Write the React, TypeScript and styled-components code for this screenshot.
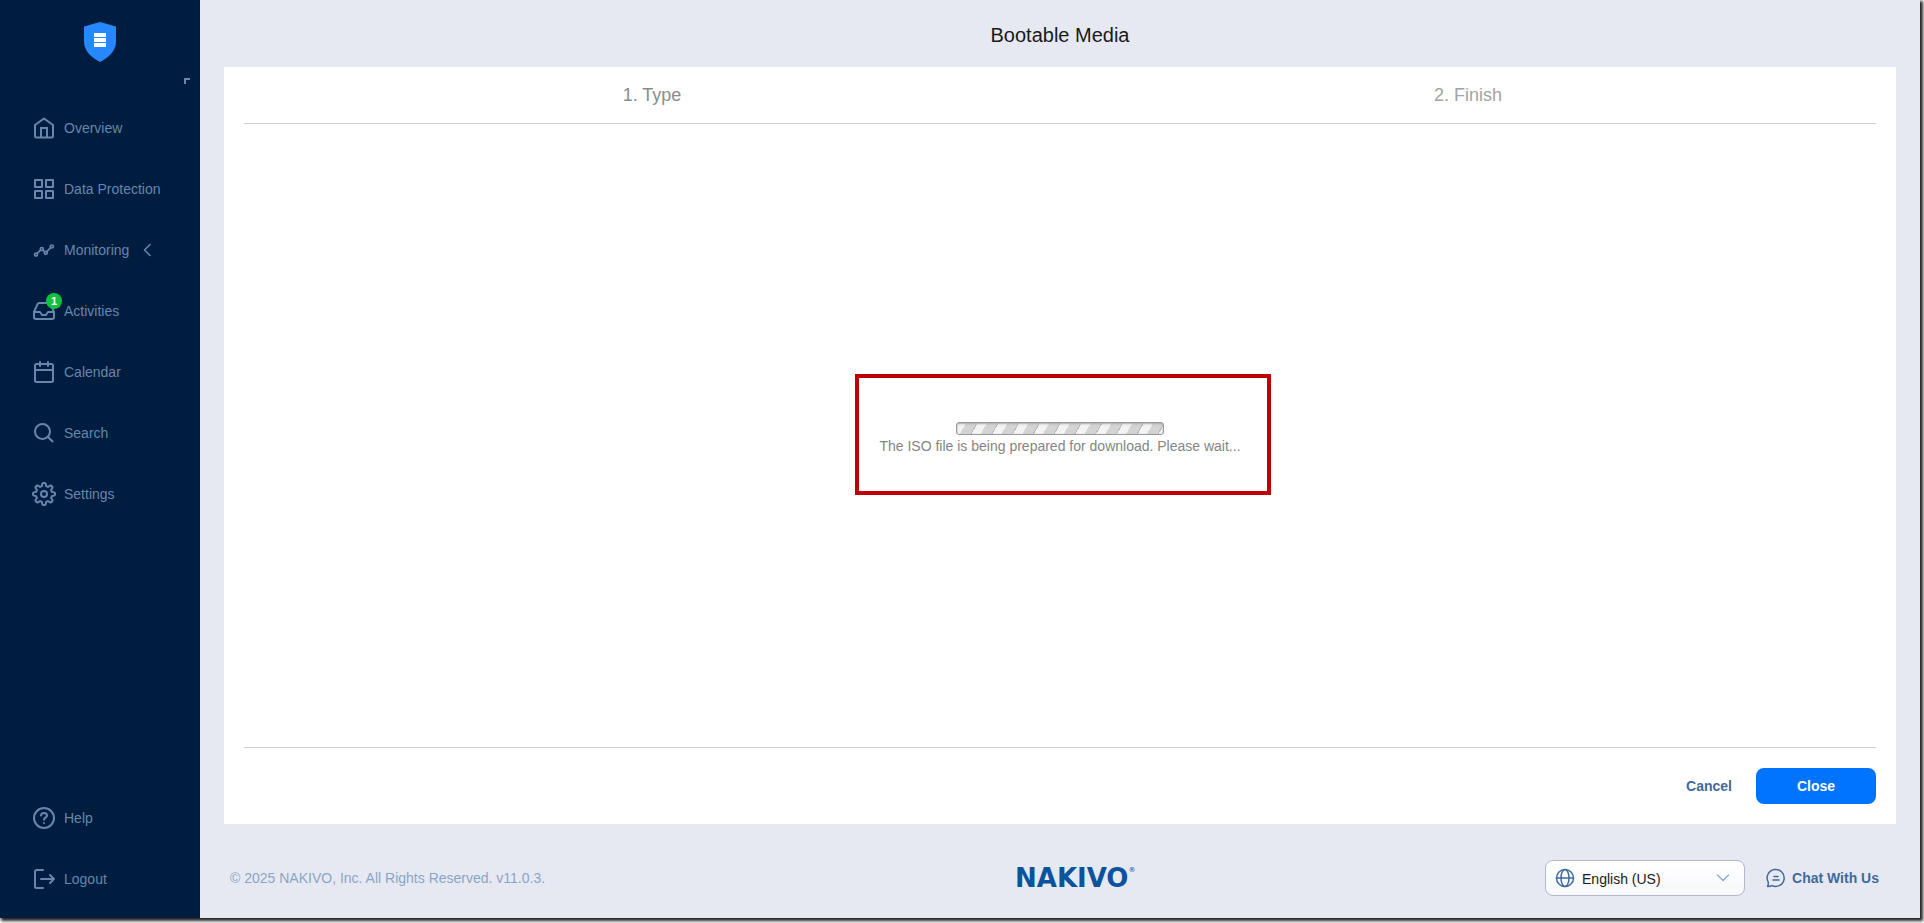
import React from 'react';
import styled, { createGlobalStyle } from 'styled-components';

const GlobalStyle = createGlobalStyle`
  *, *::before, *::after { box-sizing: border-box; }
  body {
    margin: 0;
    background: #fff;
    font-family: "Liberation Sans", Arial, sans-serif;
    font-size: 14px;
    line-height: 20px;
  }
`;

const Page = styled.div`
  min-height: 100vh;
  display: flex;
  padding: 0 4px 5px 0;
`;

const Shell = styled.div`
  flex: 1;
  display: flex;
  background: #e6e9f2;
  box-shadow: 2px 2px 3px 1px #222;
`;

const Sidebar = styled.aside`
  position: relative;
  flex: none;
  width: 200px;
  display: flex;
  flex-direction: column;
  justify-content: space-between;
  padding: 22px 0 8px;
  background: #001c3f;
`;

const Brand = styled.a`
  display: flex;
  justify-content: center;
  margin-bottom: 36px;
`;

const PinMark = styled.button`
  position: absolute;
  top: 78px;
  right: 10px;
  width: 6px;
  height: 6px;
  padding: 0;
  border: solid #6587ad;
  border-width: 2px 0 0 2px;
  background: none;
`;

const Nav = styled.nav`
  display: flex;
  flex-direction: column;
`;

const NavLink = styled.a`
  display: flex;
  align-items: center;
  gap: 8px;
  height: 61px;
  padding: 0 0 1px 32px;
  color: #6587ad;
  text-decoration: none;
`;

const NavIcon = styled.span`
  position: relative;
  display: flex;
  width: 24px;
  height: 24px;
`;

const Badge = styled.span`
  position: absolute;
  top: -6px;
  right: -6px;
  width: 16px;
  height: 16px;
  border-radius: 50%;
  background: #0dc143;
  color: #fff;
  font-size: 11px;
  font-weight: bold;
  line-height: 16px;
  text-align: center;
`;

const Main = styled.main`
  flex: 1;
  min-width: 0;
  display: flex;
  flex-direction: column;
`;

const Title = styled.h1`
  margin: 0;
  padding: 23px 0 20px;
  color: #1a1a1a;
  font-size: 20px;
  font-weight: normal;
  line-height: 24px;
  text-align: center;
`;

const Panel = styled.section`
  flex: 1;
  display: flex;
  flex-direction: column;
  margin: 0 24px;
  padding: 0 20px;
  background: #fff;
`;

const Steps = styled.ol`
  display: flex;
  margin: 0;
  padding: 16px 0;
  border-bottom: 1px solid #cccecf;
  list-style: none;
`;

const Step = styled.li<{ $dim?: boolean }>`
  flex: 1;
  color: ${p => (p.$dim ? '#a3a3a3' : '#8c8c8c')};
  font-size: 18px;
  line-height: 24px;
  text-align: center;
`;

const Content = styled.div`
  flex: 1;
  display: flex;
  align-items: center;
  justify-content: center;
  padding-top: 6px;
`;

const Status = styled.div`
  position: relative;
  display: flex;
  flex-direction: column;
  align-items: center;
  gap: 1px;
  color: #858585;
`;

const Progress = styled.div`
  width: 208px;
  height: 13px;
  border: 1px solid #989a9a;
  border-radius: 3px;
  background: repeating-linear-gradient(
    120deg,
    #f3f3f3 0 8px,
    #d3d3d3 8px 17px,
    #b9b9b9 17px 18px
  );
  box-shadow: inset 0 1px 2px #aaa;
`;

const Highlight = styled.div`
  position: absolute;
  inset: -48px -30px -39px -24px;
  border: 4px solid #c00000;
  pointer-events: none;
`;

const Actions = styled.div`
  display: flex;
  justify-content: flex-end;
  padding: 20px 0;
  border-top: 1px solid #cccecf;
`;

const Button = styled.button<{ $primary?: boolean }>`
  height: 36px;
  padding: 0 24px;
  width: ${p => (p.$primary ? '120px' : 'auto')};
  border: 0;
  border-radius: 8px;
  background: ${p => (p.$primary ? '#0073ff' : 'none')};
  color: ${p => (p.$primary ? '#fff' : '#416a9c')};
  font: bold 14px/20px "Liberation Sans", Arial, sans-serif;
`;

const Footer = styled.footer`
  display: grid;
  grid-template-columns: 1fr 120px 1fr;
  align-items: center;
  padding: 36px 0 22px 30px;
`;

const Copyright = styled.small`
  color: #8ba5c5;
  font-size: 14px;
`;

const Wordmark = styled.div`
  display: flex;
  color: #0b549d;
  font: bold 26px/32px "DejaVu Sans", Verdana, sans-serif;
  white-space: nowrap;

  sup {
    font-size: 7px;
    font-weight: normal;
    line-height: 16px;
  }
`;

const Tools = styled.div`
  display: flex;
  align-items: center;
  justify-content: flex-end;
  gap: 21px;
  padding-right: 41px;
`;

const Language = styled.label`
  position: relative;
  display: flex;
  align-items: center;
  width: 200px;
  height: 36px;
  color: #416a9c;

  svg { position: absolute; pointer-events: none; }
  svg:first-child { left: 10px; z-index: 1; }
  svg:last-child { right: 14px; color: #8ba9cf; }
`;

const LanguageSelect = styled.select`
  appearance: none;
  width: 100%;
  height: 36px;
  padding: 2px 36px 0 36px;
  border: 1px solid #b3b8cd;
  border-radius: 8px;
  background: linear-gradient(#fff, #f7f8fb);
  color: #1a1a1a;
  font: 14px/20px "Liberation Sans", Arial, sans-serif;
`;

const ChatLink = styled.a`
  display: flex;
  align-items: center;
  gap: 6px;
  color: #416a9c;
  font-weight: bold;
  text-decoration: none;
`;

type IconProps = { size?: number; weight?: number; children: React.ReactNode };

const Icon = ({ size = 24, weight = 2, children }: IconProps) => (
  <svg
    width={size}
    height={size}
    viewBox={`0 0 ${size} ${size}`}
    fill="none"
    stroke="currentColor"
    strokeWidth={weight}
    strokeLinejoin="round"
    strokeLinecap="round"
    aria-hidden="true"
  >
    {children}
  </svg>
);

const HomeIcon = () => (
  <Icon>
    <path d="M3 9 12 2.500 21 9v11a1.500 1.500 0 0 1-1.500 1.500h-15A1.500 1.500 0 0 1 3 20Z" />
    <path d="M9 21v-9h6v9" strokeLinejoin="miter" />
  </Icon>
);

const GridIcon = () => (
  <Icon>
    <path d="M3 3h7v7H3zM14 3h7v7h-7zM3 14h7v7H3zM14 14h7v7h-7z" />
  </Icon>
);

const MonitoringIcon = () => (
  <Icon weight={1.7}>
    <circle cx="4" cy="16.600" r="1.500" />
    <circle cx="9.800" cy="11" r="1.500" />
    <circle cx="13.800" cy="14.800" r="1.500" />
    <circle cx="19.800" cy="8.500" r="1.500" />
    <path d="m5.300 15.300 3.200-3.200M11 12.100l1.600 1.600M15 13.500l3.600-3.800" />
  </Icon>
);

const InboxIcon = () => (
  <Icon>
    <path d="M22 13h-6l-2 3h-4l-2-3H2" />
    <path d="M5.500 5.100 2 13v5a2 2 0 0 0 2 2h16a2 2 0 0 0 2-2v-5l-3.500-7.900A2 2 0 0 0 16.800 4H7.200a2 2 0 0 0-1.700 1.100Z" />
  </Icon>
);

const CalendarIcon = () => (
  <Icon>
    <rect x="3" y="4" width="18" height="18" rx="1.500" />
    <path d="M8 2v4M16 2v4M3 10h18" />
  </Icon>
);

const SearchIcon = () => (
  <Icon>
    <circle cx="10.500" cy="10.500" r="7.500" />
    <path d="m16 16 4.500 4.500" />
  </Icon>
);

const gearPath = Array.from({ length: 97 }, (_, i) => {
  const angle = (i / 96) * Math.PI * 2;
  const wave = Math.cos(angle * 8);
  const radius = 9.5 + 1.5 * Math.tanh(wave * 2.5);
  const x = 12 + radius * Math.sin(angle);
  const y = 12 - radius * Math.cos(angle);
  return `${i ? 'L' : 'M'}${x.toFixed(2)} ${y.toFixed(2)}`;
}).join('');

const GearIcon = () => (
  <Icon>
    <circle cx="12" cy="12" r="3" />
    <path d={`${gearPath}Z`} />
  </Icon>
);

const HelpIcon = () => (
  <Icon>
    <circle cx="12" cy="12" r="10" />
    <path d="M9 9.500c.4-3.700 6.200-3.200 6 .200-.2 2-3 2-3 4M12 17v.1" />
  </Icon>
);

const LogoutIcon = () => (
  <Icon>
    <path d="M11 3H4.500A1.500 1.500 0 0 0 3 4.500v15A1.500 1.500 0 0 0 4.500 21H11" />
    <path d="M9 12h13M18 8l4 4-4 4" />
  </Icon>
);

const ShieldLogo = () => (
  <svg width="32" height="40" viewBox="0 0 32 40" aria-hidden="true">
    <path d="M16 0 32 4.500V20c0 9-8 16-16 20C8 36 0 29 0 20V4.500Z" fill="#2688ff" />
    <path d="M10 11h12v4H10zM10 16h12v4H10zM10 21h12v4H10z" fill="#fff" />
  </svg>
);

const mainItems = [
  { label: 'Overview', icon: <HomeIcon /> },
  { label: 'Data Protection', icon: <GridIcon /> },
  { label: 'Monitoring', icon: <MonitoringIcon />, expandable: true },
  { label: 'Activities', icon: <InboxIcon />, count: 1 },
  { label: 'Calendar', icon: <CalendarIcon /> },
  { label: 'Search', icon: <SearchIcon /> },
  { label: 'Settings', icon: <GearIcon /> },
];

const bottomItems = [
  { label: 'Help', icon: <HelpIcon /> },
  { label: 'Logout', icon: <LogoutIcon /> },
];

type Item = { label: string; icon: React.ReactNode; expandable?: boolean; count?: number };

const NavItem = ({ label, icon, expandable, count }: Item) => (
  <NavLink href="#">
    <NavIcon>
      {icon}
      {count && <Badge>{count}</Badge>}
    </NavIcon>
    {label}
    {expandable && (
      <Icon size={20} weight={1.5}>
        <path d="m13 4.500-5.500 5.500 5.500 5.500" />
      </Icon>
    )}
  </NavLink>
);

export default function App() {
  return (
    <Page>
      <GlobalStyle />
      <Shell>
        <Sidebar>
          <div>
            <Brand href="#" aria-label="Home">
              <ShieldLogo />
            </Brand>
            <Nav>{mainItems.map(item => <NavItem key={item.label} {...item} />)}</Nav>
          </div>
          <PinMark type="button" aria-label="Collapse menu" />
          <Nav>{bottomItems.map(item => <NavItem key={item.label} {...item} />)}</Nav>
        </Sidebar>
        <Main>
          <Title>Bootable Media</Title>
          <Panel>
            <Steps>
              <Step>1. Type</Step>
              <Step $dim>2. Finish</Step>
            </Steps>
            <Content>
              <Status role="status">
                <Progress role="progressbar" aria-label="Preparing ISO file" />
                <span>The ISO file is being prepared for download. Please wait...</span>
                <Highlight />
              </Status>
            </Content>
            <Actions>
              <Button type="button">Cancel</Button>
              <Button type="button" $primary>Close</Button>
            </Actions>
          </Panel>
          <Footer>
            <Copyright>© 2025 NAKIVO, Inc. All Rights Reserved. v11.0.3.</Copyright>
            <Wordmark>NAKIVO<sup>®</sup></Wordmark>
            <Tools>
              <Language>
                <Icon size={20} weight={1.5}>
                  <circle cx="10" cy="10" r="8.500" />
                  <ellipse cx="10" cy="10" rx="4" ry="8.500" />
                  <path d="M1.500 10h17" />
                </Icon>
                <LanguageSelect aria-label="Language">
                  <option>English (US)</option>
                </LanguageSelect>
                <Icon size={16} weight={1.3}>
                  <path d="m2.500 5 5.500 5.500L13.500 5" />
                </Icon>
              </Language>
              <ChatLink href="#">
                <Icon size={20} weight={1.5}>
                  <path d="M1.500 18.500c1-1.500 1-2.500.700-4.500A8.500 8.500 0 1 1 6 17.600c-1.500.900-2.500.900-4.500.900Z" />
                  <path d="M8 8.500h4M7 12h6" />
                </Icon>
                Chat With Us
              </ChatLink>
            </Tools>
          </Footer>
        </Main>
      </Shell>
    </Page>
  );
}
